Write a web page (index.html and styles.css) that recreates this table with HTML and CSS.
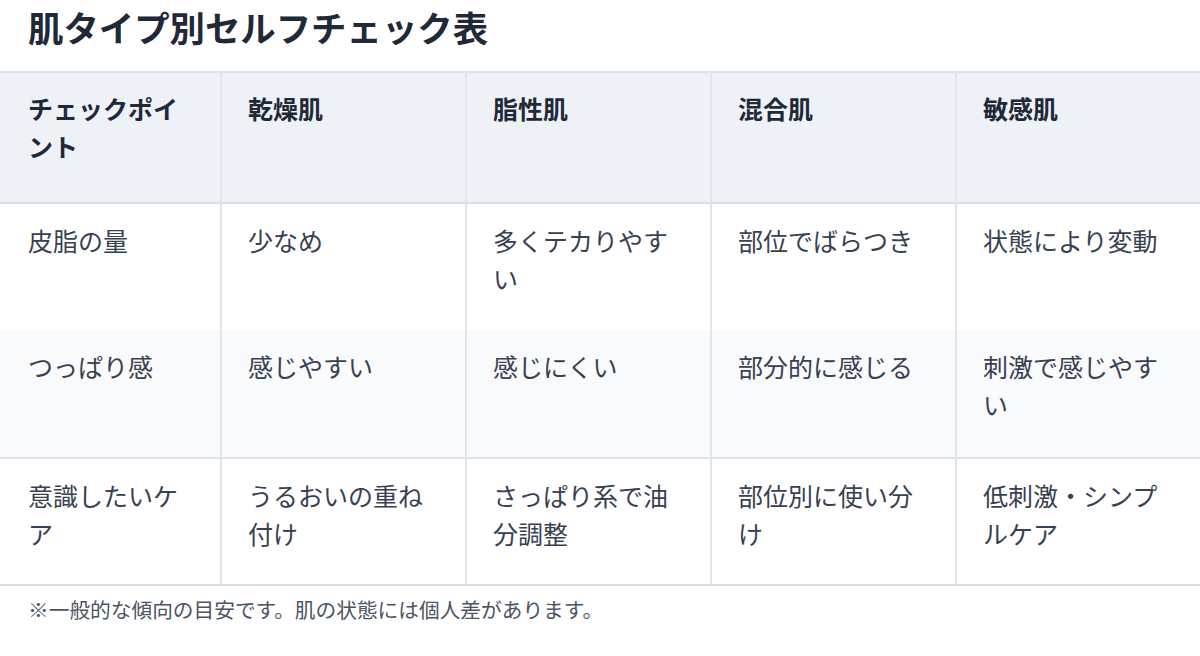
FILE: index.html
```html
<!DOCTYPE html>
<html lang="ja">
<head>
<meta charset="utf-8">
<title>肌タイプ別セルフチェック表</title>
<link rel="stylesheet" href="styles.css">
</head>
<body>
<h2 class="title">肌タイプ別セルフチェック表</h2>
<table class="check-table">
  <colgroup>
    <col class="c0"><col class="c1"><col class="c1"><col class="c1"><col class="c4">
  </colgroup>
  <thead>
    <tr>
      <th>チェックポイント</th>
      <th>乾燥肌</th>
      <th>脂性肌</th>
      <th>混合肌</th>
      <th>敏感肌</th>
    </tr>
  </thead>
  <tbody>
    <tr class="row-a">
      <td>皮脂の量</td>
      <td>少なめ</td>
      <td>多くテカりやすい</td>
      <td>部位でばらつき</td>
      <td>状態により変動</td>
    </tr>
    <tr class="row-b">
      <td>つっぱり感</td>
      <td>感じやすい</td>
      <td>感じにくい</td>
      <td>部分的に感じる</td>
      <td>刺激で感じやすい</td>
    </tr>
    <tr class="row-c">
      <td>意識したいケア</td>
      <td>うるおいの重ね付け</td>
      <td>さっぱり系で油分調整</td>
      <td>部位別に使い分け</td>
      <td>低刺激・シンプルケア</td>
    </tr>
  </tbody>
</table>
<p class="note">※一般的な傾向の目安です。肌の状態には個人差があります。</p>
</body>
</html>
```
FILE: styles.css
```css
html, body {
  margin: 0;
  padding: 0;
  background: #ffffff;
}
body {
  font-family: "Noto Sans CJK JP", "Noto Sans", sans-serif;
  color: #374151;
  width: 1200px;
}
.title {
  margin: 0;
  padding: 6px 0 0 28px;
  font-size: 35.4px;
  line-height: 42px;
  font-weight: 700;
  color: #1f2937;
  height: 71px;
  box-sizing: border-box;
}
.check-table {
  width: 1200px;
  border-collapse: collapse;
  table-layout: fixed;
  font-size: 25px;
  line-height: 37.5px;
}
.c0 { width: 221px; }
.c1 { width: 245px; }
.c4 { width: 244px; }
.check-table th,
.check-table td {
  text-align: left;
  vertical-align: top;
  border-left: 2px solid #e0e4eb;
  padding: 18px 26px 33px 26px;
}
.check-table th:first-child,
.check-table td:first-child {
  border-left: none;
  padding-left: 28px;
}
.check-table thead tr {
  background: #eef2f7;
  border-top: 2px solid #dcdee3;
  border-bottom: 2px solid #dadfe7;
}
.check-table th {
  font-weight: 700;
  color: #1f2937;
  padding-top: 17px;
  padding-bottom: 37px;
}
.row-b {
  background: #f9fafc;
  border-bottom: 2px solid #dde1e8;
}
.row-b td {
  padding-bottom: 34px;
}
.row-c td {
  padding-bottom: 32px;
}
.row-c {
  border-bottom: 2px solid #dadde3;
}
.note {
  margin: 8px 0 0 0;
  padding-left: 28px;
  font-size: 20.7px;
  line-height: 30px;
  color: #4b5563;
}
```
